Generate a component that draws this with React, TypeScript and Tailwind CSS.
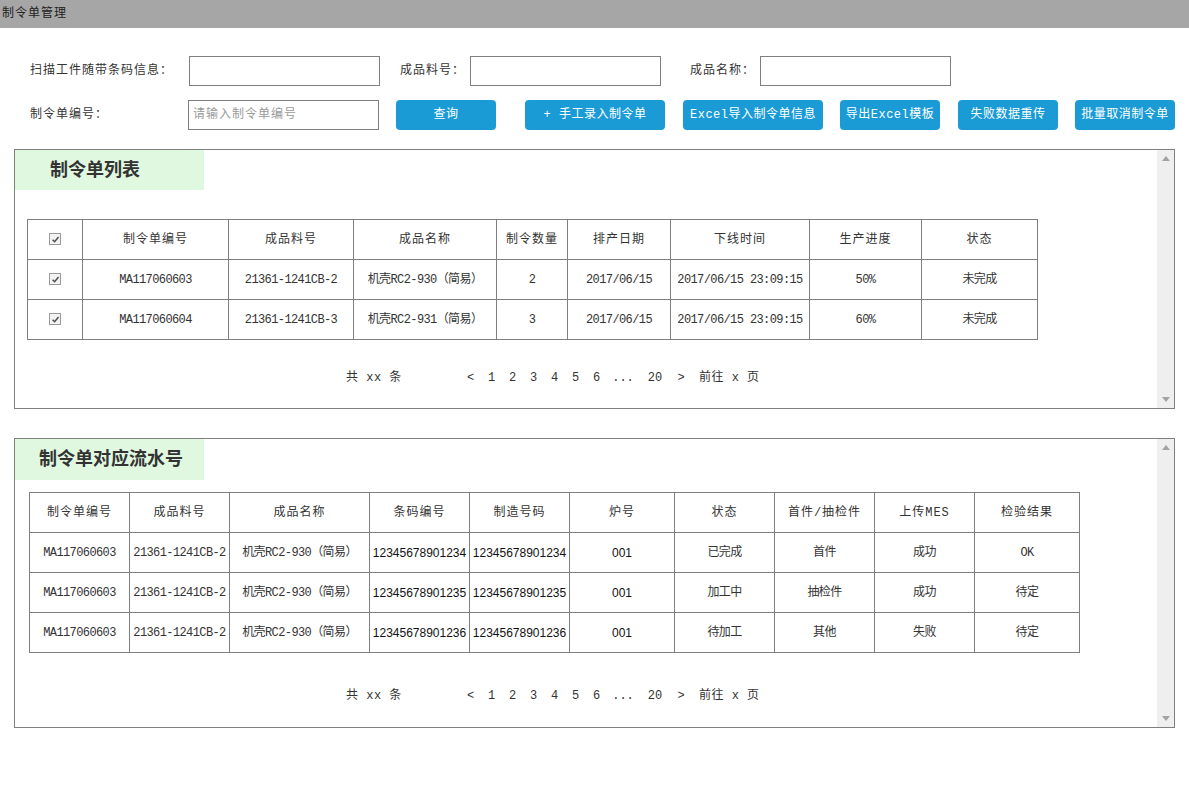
import type { ReactNode } from "react";

const FONT = "font-['Liberation_Mono','Noto_Sans_CJK_SC',monospace]";
const SANS = "font-['Liberation_Sans','Noto_Sans_CJK_SC',sans-serif]";

const orders = [
  ["MA117060603", "21361-1241CB-2", "机壳RC2-930（简易）", "2", "2017/06/15", "2017/06/15 23:09:15", "50%", "未完成"],
  ["MA117060604", "21361-1241CB-3", "机壳RC2-931（简易）", "3", "2017/06/15", "2017/06/15 23:09:15", "60%", "未完成"],
];

const serials = [
  ["MA117060603", "21361-1241CB-2", "机壳RC2-930（简易）", "12345678901234", "12345678901234", "001", "已完成", "首件", "成功", "OK"],
  ["MA117060603", "21361-1241CB-2", "机壳RC2-930（简易）", "12345678901235", "12345678901235", "001", "加工中", "抽检件", "成功", "待定"],
  ["MA117060603", "21361-1241CB-2", "机壳RC2-930（简易）", "12345678901236", "12345678901236", "001", "待加工", "其他", "失败", "待定"],
];

function Checkbox() {
  return (
    <span className="inline-flex size-[12px] items-center justify-center border border-[#9a9a9a] bg-[#f2f2f2] align-middle">
      <svg viewBox="0 0 10 10" className="size-[9px]">
        <path d="M1.8 5.2 L4 7.4 L8.4 2.2" fill="none" stroke="#4a4a4a" strokeWidth="1.6" />
      </svg>
    </span>
  );
}

function Cell({ children, className = "" }: { children: ReactNode; className?: string }) {
  return (
    <td className={`h-[40px] whitespace-nowrap border border-[#7f7f7f] p-0 text-center text-[12px] ${className}`}>
      {children}
    </td>
  );
}

function Button({ children, width }: { children: ReactNode; width: string }) {
  return (
    <button
      type="button"
      className={`h-[30px] ${width} rounded-[4px] bg-[#1a9bd6] text-[12px] tracking-[0.5px] text-white`}
    >
      {children}
    </button>
  );
}

function Input({ placeholder }: { placeholder?: string }) {
  return (
    <input
      className="h-[30px] w-[191px] border border-[#7f7f7f] bg-white px-[4px] text-[12px] tracking-[1px] outline-none placeholder:text-[#9a9a9a]"
      placeholder={placeholder}
    />
  );
}

function Scrollbar() {
  return (
    <div className="flex w-[17px] shrink-0 flex-col items-center justify-between bg-[#efefef] py-[6px]">
      <svg viewBox="0 0 8 5" className="h-[5px] w-[8px]">
        <path d="M0 5 L4 0 L8 5 Z" fill="#a3a3a3" />
      </svg>
      <svg viewBox="0 0 8 5" className="h-[5px] w-[8px]">
        <path d="M0 0 L8 0 L4 5 Z" fill="#a3a3a3" />
      </svg>
    </div>
  );
}

function Pagination() {
  return (
    <div className="flex h-[20px] items-center pl-[331px] text-[12px] text-[#333]">
      <span className="w-[114px] tracking-[0.5px]">共 xx 条</span>
      <span className="w-[21px] text-center">&lt;</span>
      {["1", "2", "3", "4", "5", "6"].map((n) => (
        <span key={n} className="w-[21px] text-center">
          {n}
        </span>
      ))}
      <span className="w-[32px] text-center">...</span>
      <span className="w-[32px] text-center">20</span>
      <span className="w-[20px] text-center">&gt;</span>
      <span className="ml-[8px] tracking-[0.5px]">前往 x 页</span>
    </div>
  );
}

function Tab({ children, className }: { children: ReactNode; className: string }) {
  return (
    <div
      className={`flex w-[189px] items-center bg-[#e0f8e0] ${SANS} text-[18px] font-bold text-[#333] ${className}`}
    >
      {children}
    </div>
  );
}

export default function App() {
  const orderCols = [55, 146, 125, 143, 71, 103, 139, 112, 116];
  const serialCols = [100, 100, 140, 100, 100, 105, 100, 100, 100, 105];

  return (
    <div className={`min-h-[786px] w-[1189px] bg-white text-[#333] ${FONT}`}>
      <div className="flex h-[28px] items-center bg-[#a6a6a6] pl-[2px] text-[12px] tracking-[1px] text-[#222]">
        制令单管理
      </div>

      <div className="pt-[28px]">
        <div className="flex h-[30px] items-center pl-[30px] text-[12px]">
          <span className="w-[159px] tracking-[1px]">扫描工件随带条码信息：</span>
          <Input />
          <span className="ml-[20px] w-[70px] tracking-[1px]">成品料号：</span>
          <Input />
          <span className="ml-[29px] w-[70px] tracking-[1px]">成品名称：</span>
          <Input />
        </div>

        <div className="mt-[14px] flex h-[30px] items-center pl-[30px] text-[12px]">
          <span className="w-[158px] tracking-[1px]">制令单编号：</span>
          <Input placeholder="请输入制令单编号" />
          <div className="ml-[17px]">
            <Button width="w-[100px]">查询</Button>
          </div>
          <div className="ml-[29px]">
            <Button width="w-[140px]">+ 手工录入制令单</Button>
          </div>
          <div className="ml-[18px]">
            <Button width="w-[140px]">Excel导入制令单信息</Button>
          </div>
          <div className="ml-[17px]">
            <Button width="w-[100px]">导出Excel模板</Button>
          </div>
          <div className="ml-[18px]">
            <Button width="w-[100px]">失败数据重传</Button>
          </div>
          <div className="ml-[17px]">
            <Button width="w-[100px]">批量取消制令单</Button>
          </div>
        </div>
      </div>

      <div className="ml-[14px] mt-[19px] flex h-[260px] w-[1161px] border border-[#7f7f7f]">
        <div className="min-w-0 flex-1">
          <Tab className="h-[40px] pl-[35px]">制令单列表</Tab>
          <table className="ml-[12px] mt-[29px] w-[1010px] table-fixed border-collapse">
            <colgroup>
              {orderCols.map((w, i) => (
                <col key={i} style={{ width: w }} />
              ))}
            </colgroup>
            <thead>
              <tr>
                <Cell>
                  <Checkbox />
                </Cell>
                {["制令单编号", "成品料号", "成品名称", "制令数量", "排产日期", "下线时间", "生产进度", "状态"].map((h) => (
                  <Cell key={h} className="font-normal tracking-[1px]">
                    {h}
                  </Cell>
                ))}
              </tr>
            </thead>
            <tbody>
              {orders.map((row) => (
                <tr key={row[0]}>
                  <Cell>
                    <Checkbox />
                  </Cell>
                  {row.map((v, i) => (
                    <Cell key={i} className="tracking-[-0.6px]">
                      {v}
                    </Cell>
                  ))}
                </tr>
              ))}
            </tbody>
          </table>
          <div className="mt-[28px]">
            <Pagination />
          </div>
        </div>
        <Scrollbar />
      </div>

      <div className="ml-[14px] mt-[29px] flex h-[290px] w-[1161px] border border-[#7f7f7f]">
        <div className="min-w-0 flex-1">
          <Tab className="h-[41px] pl-[24px]">制令单对应流水号</Tab>
          <table className="ml-[14px] mt-[12px] w-[1050px] table-fixed border-collapse">
            <colgroup>
              {serialCols.map((w, i) => (
                <col key={i} style={{ width: w }} />
              ))}
            </colgroup>
            <thead>
              <tr>
                {["制令单编号", "成品料号", "成品名称", "条码编号", "制造号码", "炉号", "状态", "首件/抽检件", "上传MES", "检验结果"].map(
                  (h) => (
                    <Cell key={h} className="font-normal tracking-[1px]">
                      {h}
                    </Cell>
                  ),
                )}
              </tr>
            </thead>
            <tbody>
              {serials.map((row) => (
                <tr key={row[3]}>
                  {row.map((v, i) => (
                    <Cell
                      key={i}
                      className={i >= 3 && i <= 5 ? `${SANS} text-[#111]` : "tracking-[-0.6px]"}
                    >
                      {v}
                    </Cell>
                  ))}
                </tr>
              ))}
            </tbody>
          </table>
          <div className="mt-[33px]">
            <Pagination />
          </div>
        </div>
        <Scrollbar />
      </div>
    </div>
  );
}
